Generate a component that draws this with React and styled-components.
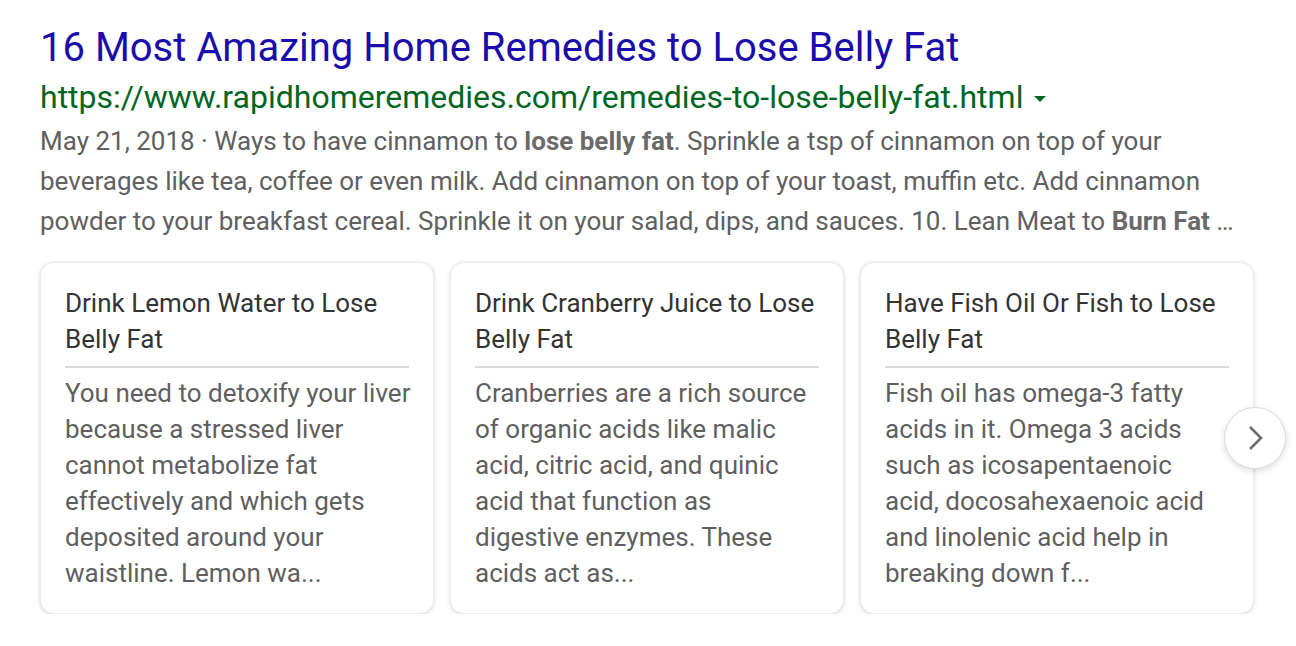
import React from "react";
import styled, { createGlobalStyle } from "styled-components";

const GlobalStyle = createGlobalStyle`
  html, body {
    margin: 0;
    background: #fff;
  }
  body {
    font-family: Roboto, "Liberation Sans", Arial, sans-serif;
  }
`;

const Result = styled.div`
  padding: 23px 0 0 40px;
  width: 1216px;
`;

const Title = styled.a`
  display: block;
  font-size: 40px;
  line-height: 50px;
  color: #1a0dab;
  text-decoration: none;
`;

const UrlRow = styled.div`
  display: flex;
  align-items: center;
  font-size: 32px;
  line-height: 48px;
  color: #006621;
`;

const Caret = styled.span`
  width: 0;
  height: 0;
  margin-left: 11px;
  margin-top: 4px;
  border-left: 6px solid transparent;
  border-right: 6px solid transparent;
  border-top: 6px solid #006621;
`;

const Snippet = styled.div`
  font-size: 26px;
  line-height: 40px;
  color: #606060;

  & b {
    color: #6a6a6a;
    font-weight: 700;
  }
`;

const Carousel = styled.div`
  position: relative;
  display: flex;
  gap: 16px;
  margin-top: 21px;
`;

const Card = styled.div`
  box-sizing: border-box;
  width: 394px;
  height: 352px;
  padding: 22px 24px 0;
  border: 1px solid #ececec;
  border-radius: 14px;
  box-shadow: 0 1px 4px rgba(0, 0, 0, 0.16);
  background: #fff;
`;

const CardTitle = styled.div`
  font-size: 26px;
  line-height: 36px;
  color: #333;
  padding-bottom: 9px;
  border-bottom: 2px solid #dadada;
`;

const CardBody = styled.div`
  margin-top: 7px;
  font-size: 26px;
  line-height: 36px;
  color: #5f5f5f;
`;

const BodyLine = styled.span`
  display: block;
  white-space: nowrap;
`;

const NextButton = styled.button`
  position: absolute;
  left: 1184px;
  top: 145px;
  width: 62px;
  height: 62px;
  padding: 0;
  border-radius: 50%;
  border: 1px solid #dcdcdc;
  background: #fff;
  box-shadow: 0 2px 6px rgba(0, 0, 0, 0.14);
  display: flex;
  align-items: center;
  justify-content: center;
`;

const cards = [
  {
    title: "Drink Lemon Water to Lose Belly Fat",
    lines: [
      "You need to detoxify your liver",
      "because a stressed liver",
      "cannot metabolize fat",
      "effectively and which gets",
      "deposited around your",
      "waistline. Lemon wa...",
    ],
  },
  {
    title: "Drink Cranberry Juice to Lose Belly Fat",
    lines: [
      "Cranberries are a rich source",
      "of organic acids like malic",
      "acid, citric acid, and quinic",
      "acid that function as",
      "digestive enzymes. These",
      "acids act as...",
    ],
  },
  {
    title: "Have Fish Oil Or Fish to Lose Belly Fat",
    lines: [
      "Fish oil has omega-3 fatty",
      "acids in it. Omega 3 acids",
      "such as icosapentaenoic",
      "acid, docosahexaenoic acid",
      "and linolenic acid help in",
      "breaking down f...",
    ],
  },
];

export default function App() {
  return (
    <>
      <GlobalStyle />
      <Result>
        <Title href="#">16 Most Amazing Home Remedies to Lose Belly Fat</Title>
        <UrlRow>
          https://www.rapidhomeremedies.com/remedies-to-lose-belly-fat.html
          <Caret />
        </UrlRow>
        <Snippet>
          May 21, 2018 · Ways to have cinnamon to <b>lose belly fat</b>. Sprinkle a tsp of cinnamon on top of your
          <br />
          beverages like tea, coffee or even milk. Add cinnamon on top of your toast, muffin etc. Add cinnamon
          <br />
          powder to your breakfast cereal. Sprinkle it on your salad, dips, and sauces. 10. Lean Meat to{" "}
          <b>Burn Fat</b> …
        </Snippet>
        <Carousel>
          {cards.map((c) => (
            <Card key={c.title}>
              <CardTitle>{c.title}</CardTitle>
              <CardBody>
                {c.lines.map((l) => (
                  <BodyLine key={l}>{l}</BodyLine>
                ))}
              </CardBody>
            </Card>
          ))}
          <NextButton aria-label="Next">
            <svg width="24" height="30" viewBox="0 0 24 30">
              <path d="M7 4 L18 15 L7 26" fill="none" stroke="#6e6e6e" strokeWidth="2.6" />
            </svg>
          </NextButton>
        </Carousel>
      </Result>
    </>
  );
}
